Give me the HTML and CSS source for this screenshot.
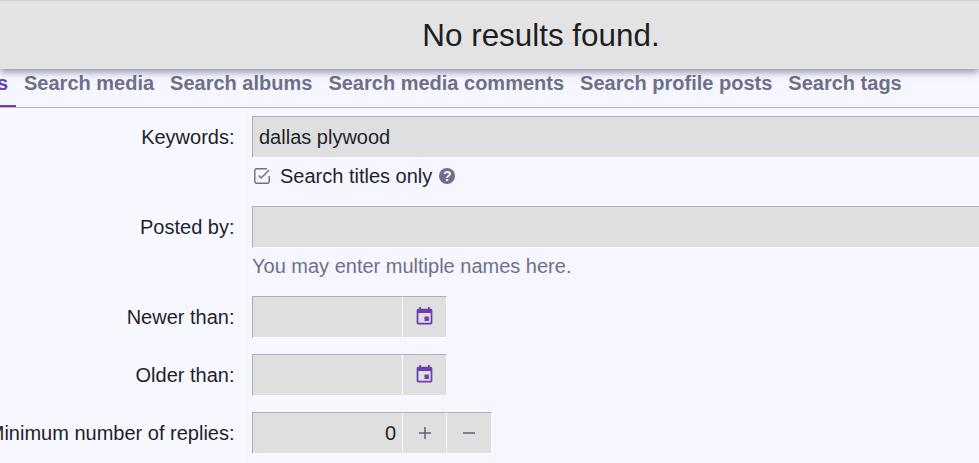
FILE: index.html
```html
<!DOCTYPE html>
<html lang="en">
<head>
<meta charset="utf-8">
<title>Search</title>
<link rel="stylesheet" href="styles.css">
</head>
<body>
<div class="notice"><span class="notice-line one"></span><span class="notice-line two"></span><p class="notice-text">No results found.</p></div>
<nav class="tabs">
  <a class="tab active">Search threads</a>
  <a class="tab">Search media</a>
  <a class="tab">Search albums</a>
  <a class="tab">Search media comments</a>
  <a class="tab">Search profile posts</a>
  <a class="tab">Search tags</a>
</nav>
<form class="form">
  <div class="row keywords">
    <label class="label">Keywords:</label>
    <div class="field">
      <div class="input wide"><span class="value">dallas plywood</span></div>
      <div class="check">
        <svg class="check-icon" viewBox="0.300 0.300 14.400 14.400" width="16" height="16"><path d="M14 7.500v5A1.500 1.500 0 0 1 12.500 14h-10A1.500 1.500 0 0 1 1 12.500v-10A1.500 1.500 0 0 1 2.500 1H12" fill="none" stroke="#6f7088" stroke-width="1.300"/><path d="M4.500 7 6.800 9.300 13.800 2" fill="none" stroke="#6f7088" stroke-width="1.300"/></svg>
        <span>Search titles only</span>
        <span class="help">?</span>
      </div>
    </div>
  </div>
  <div class="row posted">
    <label class="label">Posted by:</label>
    <div class="field">
      <div class="input wide"></div>
      <div class="hint">You may enter multiple names here.</div>
    </div>
  </div>
  <div class="row date">
    <label class="label">Newer than:</label>
    <div class="field group">
      <div class="input short"></div>
      <div class="btn"><svg class="cal" viewBox="0 0 24 24" width="21" height="21"><path d="M17 12h-5v5h5v-5zM16 1v2H8V1H6v2H5c-1.11 0-1.99.9-1.99 2L3 19c0 1.1.89 2 2 2h14c1.1 0 2-.9 2-2V5c0-1.1-.9-2-2-2h-1V1h-2zm3 18H5V8h14v11z"/></svg></div>
    </div>
  </div>
  <div class="row date">
    <label class="label">Older than:</label>
    <div class="field group">
      <div class="input short"></div>
      <div class="btn"><svg class="cal" viewBox="0 0 24 24" width="21" height="21"><path d="M17 12h-5v5h5v-5zM16 1v2H8V1H6v2H5c-1.11 0-1.99.9-1.99 2L3 19c0 1.1.89 2 2 2h14c1.1 0 2-.9 2-2V5c0-1.1-.9-2-2-2h-1V1h-2zm3 18H5V8h14v11z"/></svg></div>
    </div>
  </div>
  <div class="row date">
    <label class="label">Minimum number of replies:</label>
    <div class="field group">
      <div class="input short num">0</div>
      <div class="btn"><svg viewBox="0 0 14 14" width="14" height="14"><path d="M7 1v12M1 7h12" stroke="#5f6078" stroke-width="1.500" fill="none"/></svg></div>
      <div class="btn"><svg viewBox="0 0 14 14" width="14" height="14"><path d="M1 7h12" stroke="#5f6078" stroke-width="1.500" fill="none"/></svg></div>
    </div>
  </div>
</form>
</body>
</html>
```
FILE: styles.css
```css
* { box-sizing: border-box; }
html, body { margin: 0; height: 100%; overflow: hidden; }
body { background: #f5f6ff; color: #1f1f2b; font: 20px/1.2 "Liberation Sans", Arial, sans-serif; position: relative; }
.notice { position: absolute; top: 0; left: 0; right: 0; height: 69px; background: #e3e3e3; border-top: 1px solid #d2cfcb; box-shadow: 0 2px 8px rgba(40,40,70,.6); display: flex; align-items: center; justify-content: center; z-index: 2; }
.notice-text { position: relative; margin: 0; font-size: 31.400px; color: #1e1e1e; padding: 2px 0 0 103px; }
.notice-line { position: absolute; left: 0; right: 0; height: 1px; background: #dedfdf; }
.notice-line.one { top: 42px; }
.notice-line.two { top: 51px; }
.tabs { display: flex; margin: 59px 0 0 -144.500px; height: 49px; border-bottom: 1px solid #b4b4bc; white-space: nowrap; }
.tab { padding: 12px 8px 0; font-weight: 700; color: #6f7088; height: 48px; }
.tab.active { color: #6a3fb0; border-bottom: 2px solid #6a3fb0; }
.row { display: flex; }
.label { flex: 0 0 244px; min-width: 0; display: flex; justify-content: flex-end; white-space: nowrap; padding: 8px 8.500px 0 0; background: #f7f7ff; border-right: 1px solid #fbfbff; line-height: 42px; }
.field { flex: 1; min-width: 0; padding: 8px 0 0 8px; }
.keywords .field { padding-bottom: 10px; }
.posted .field { padding-bottom: 10px; }
.date .field { padding-bottom: 8px; }
.group { display: flex; }
.input { height: 42px; background: #dfdfdf; border-top: 1px solid #b1b1b5; border-left: 1px solid #b1b1b5; border-bottom: 1px solid #fafaff; line-height: 40px; padding: 0 6px; }
.wide { width: 760px; }
.short { width: 151px; border-right: 1px solid #fafaff; }
.num { text-align: right; }
.btn { width: 44px; height: 42px; background: #dfdfdf; border-top: 1px solid #b1b1b5; border-right: 1px solid #fafaff; border-bottom: 1px solid #fafaff; display: flex; align-items: center; justify-content: center; }
.btn + .btn { width: 45px; }
.cal { fill: #6a3fb0; margin-bottom: 2px; }
.check { display: flex; align-items: center; margin: 6px 0 0 1.500px; height: 24px; }
.check-icon { margin-right: 10.500px; }
.help { width: 16px; height: 16px; border-radius: 50%; background: #6f7088; color: #f5f6ff; font-size: 14px; font-weight: 700; line-height: 16px; text-align: center; margin-left: 7px; }
.hint { color: #6f7088; margin-top: 6px; height: 24px; line-height: 24px; }
```
